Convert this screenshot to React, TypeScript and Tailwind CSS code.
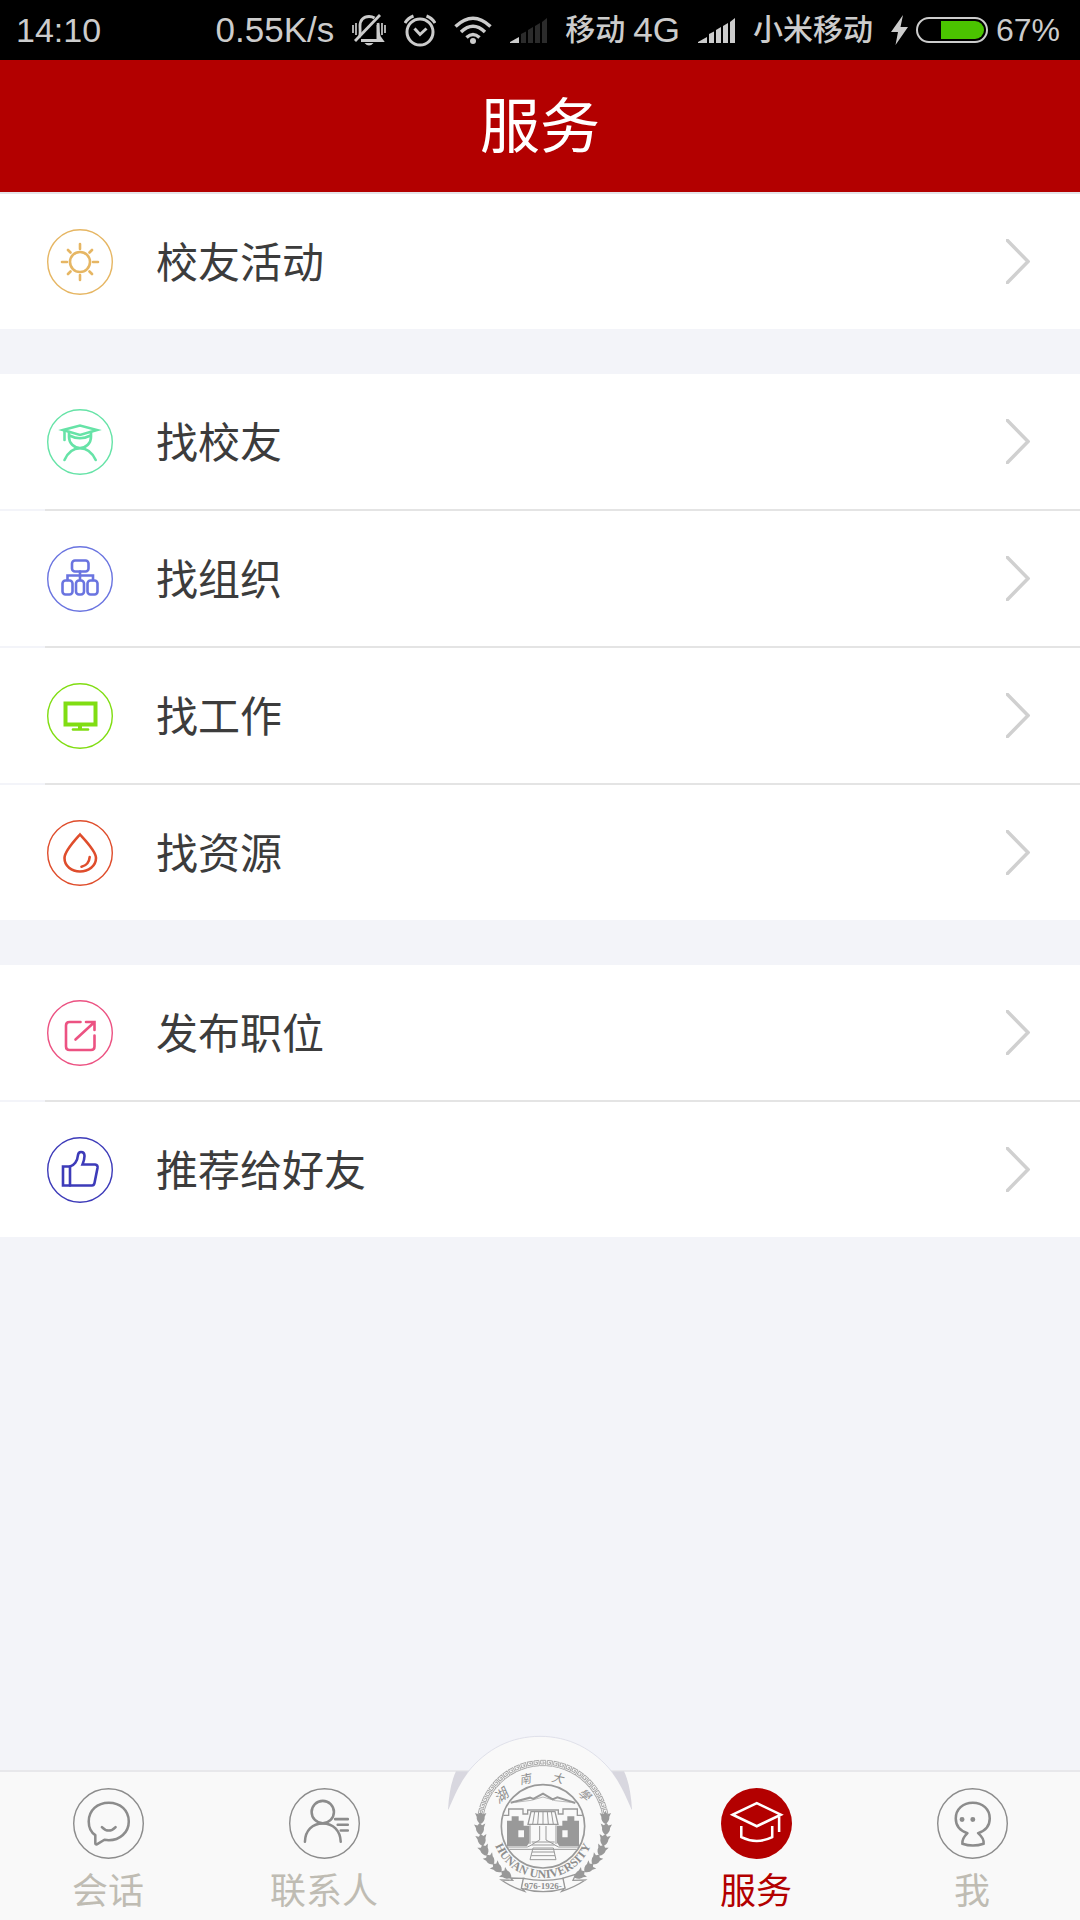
import React from 'react';

interface ServiceItem {
  label: string;
  color: string;
  icon: React.ReactNode;
}

interface TabItem {
  label: string;
  icon: React.ReactNode;
  active?: boolean;
}

const groups: ServiceItem[][] = [
  [
    {
      label: '校友活动',
      color: 'text-[#e6b663]',
      icon: (
        <>
          <circle cx="33" cy="33" r="10" />
          <path d="M33 15v5M33 46v5M15 33h5M46 33h5M21 21l2.500 2.500M42.500 42.500L45 45M21 45l2.500-2.500M42.500 23.500L45 21" />
        </>
      ),
    },
  ],
  [
    {
      label: '找校友',
      color: 'text-[#66e3a7]',
      icon: (
        <>
          <path d="M16 21L33 16.500L50 21L33 26Z" />
          <path d="M17.500 21.500V31" />
          <path d="M22 23v5a11 11 0 0 0 22 0v-5M22.500 26.500Q33 32 43.500 26.500" />
          <path d="M17.500 51C21 43 26 39.200 33 39.200S45 43 48.700 51" />
        </>
      ),
    },
    {
      label: '找组织',
      color: 'text-[#6a74e0]',
      icon: (
        <>
          <rect x="25" y="14.500" width="16.500" height="11" rx="3" />
          <path d="M33 25.500V34M20.500 34v-4.500H46V34" />
          <rect x="15.500" y="34.500" width="10" height="14" rx="3" />
          <rect x="29" y="34.500" width="8" height="14" rx="3" />
          <rect x="40.500" y="34.500" width="10" height="14" rx="3" />
        </>
      ),
    },
    {
      label: '找工作',
      color: 'text-[#80dd12]',
      icon: (
        <>
          <rect x="18.500" y="20.500" width="30" height="21" strokeWidth="4" />
          <path d="M33 43v3" strokeWidth="4" strokeLinecap="butt" />
          <path d="M26 46.500h15" />
        </>
      ),
    },
    {
      label: '找资源',
      color: 'text-[#df4d2c]',
      icon: (
        <>
          <path d="M33 14.500C29 19 17.500 31 17.500 38C17.500 46 24.500 51.500 33 51.500S49 46 49 38C49 31 37 19 33 14.500Z" />
          <path d="M42.700 37Q42 45 34.500 46.700" />
        </>
      ),
    },
  ],
  [
    {
      label: '发布职位',
      color: 'text-[#ec5282]',
      icon: (
        <>
          <path d="M33.500 22H22.500Q19 22 19 25.500V46.500Q19 50 22.500 50H44Q47.500 50 47.500 46.500V35.500" />
          <path d="M28.500 39.500L47 22.500M39 22H47.500V30" />
        </>
      ),
    },
    {
      label: '推荐给好友',
      color: 'text-[#3d3bb9]',
      icon: (
        <>
          <path d="M16 29.500H23C27 28.500 30.500 24 30.800 19C31 16.500 32 15 34 15C36 15 37.500 16.500 37.500 19C37.500 22.500 36.500 25 35.500 27.500H48Q51 28 50.500 31L47.500 46Q47 48.500 45 48.500H16Z" />
          <path d="M23 29.500V48.500" />
        </>
      ),
    },
  ],
];

const leftTabs: TabItem[] = [
  {
    label: '会话',
    icon: (
      <>
        <path d="M22 46.500C17.500 43.500 15.500 38.500 15.500 33C15.500 22 24 14.500 35.300 14.500S55 22 55 33S46 51.500 35.300 51.500L31 51L23.500 55.500Q22 56 22 54.500Z" />
        <path d="M28.500 38.500Q35.300 45.500 42 38.500" />
      </>
    ),
  },
  {
    label: '联系人',
    icon: (
      <>
        <circle cx="33.300" cy="23.700" r="11" />
        <path d="M15.700 53C16 42 23 35 33.300 35S50.500 42 51 53M45.500 30.700H58M48 36.300H58M51 42H58" />
      </>
    ),
  },
];

const rightTabs: TabItem[] = [
  {
    label: '服务',
    active: true,
    icon: (
      <>
        <path d="M11.500 26.300L35.300 15L59 26.300L35.300 37.700Z" strokeLinejoin="miter" />
        <path d="M57.300 28V43.500M20 37.500V48.500Q35.300 56 50.500 48.500V37.500" strokeLinecap="butt" />
      </>
    ),
  },
  {
    label: '我',
    icon: (
      <>
        <path d="M30 44.500C22.500 42 18.500 36.500 18.500 30C18.500 21 25.500 14.500 35.300 14.500S52 21 52 30C52 36.500 48 42 40.500 44.500C44 47.500 46.500 51 46 55Q35.300 58.500 25 55C24.500 51 27 47.500 30 44.500Z" />
        <circle cx="24.700" cy="31" r="1.200" fill="currentColor" />
        <circle cx="35.300" cy="31" r="1.200" fill="currentColor" />
      </>
    ),
  },
];

const SignalIcon: React.FC<{ level: number }> = ({ level }) => {
  const bars = ['M0 25V24L9 19V25Z', 'M11 25V16L16 13.500V25Z', 'M18 25V12L23 9V25Z', 'M25 25V8L30 5V25Z', 'M32 25V4L37 0V25Z'];
  return (
    <svg viewBox="0 0 37 25" className="h-[25px] w-[37px]">
      {bars.map((d, i) => (
        <path key={d} d={d} fill={i < level ? '#cccccc' : '#2b2b2b'} />
      ))}
    </svg>
  );
};

const StatusBar: React.FC = () => (
  <div className="flex h-[60px] items-center justify-between bg-black pl-4 pr-5 text-[35px] leading-[60px] whitespace-nowrap text-[#cccccc]">
    <span className="text-[34px]">14:10</span>
    <div className="flex items-center gap-[18px]">
      <span>0.55K/s</span>
      {/* muted / vibrate */}
      <svg viewBox="0 0 34 32" className="h-8 w-[34px]" fill="none" stroke="currentColor" strokeWidth="2.800">
        <path d="M7.500 23C8.500 20 8 16 8 12C8 6 11.500 2.500 17 2.500C19 2.500 21 3 22.500 4" />
        <path d="M3 27L28 1" />
        <path d="M26 9C27 13 25.500 19 27.500 23L30 26.500H9" />
        <path d="M24.500 11L27 10V25H24.500Z" fill="currentColor" stroke="none" />
        <path d="M12.500 29H21.500Q17 34 12.500 29Z" fill="currentColor" stroke="none" />
        <path d="M1 11v8M4 9v12M30 9v12M33 11v8" strokeWidth="1.700" />
      </svg>
      {/* alarm */}
      <svg viewBox="0 0 32 33" className="h-[33px] w-8" fill="none" stroke="currentColor" strokeWidth="3">
        <circle cx="16" cy="18" r="13" />
        <path d="M10.500 14.500L16 20.500L22.500 14.500" />
        <path d="M1 9Q4 4 9.500 2M31 9Q28 4 22.500 2" />
      </svg>
      {/* wifi */}
      <svg viewBox="0 0 38 28" className="h-7 w-[38px]" fill="none" stroke="currentColor" strokeWidth="3.500">
        <path d="M1.500 10.500Q19 -6 36.500 10.500M7 16Q19 4.500 31 16M12.500 21.500Q19 15.500 25.500 21.500" />
        <circle cx="19" cy="25" r="3" fill="currentColor" stroke="none" />
      </svg>
      <SignalIcon level={1} />
      <span className="flex gap-2">
        <span className="text-[30px] font-medium">移动</span>
        <span>4G</span>
      </span>
      <SignalIcon level={5} />
      <span className="text-[30px] font-medium">小米移动</span>
      <div className="flex items-center gap-2">
        <svg viewBox="0 0 17 30" className="h-[30px] w-[17px]" fill="currentColor">
          <path d="M12 0L0 17H7L4.500 30L17 12H9.500Z" />
        </svg>
        <svg viewBox="0 0 72 26" className="h-[26px] w-[72px]">
          <rect x="1" y="1" width="70" height="24" rx="12" fill="none" stroke="#cccccc" strokeWidth="2" />
          <path d="M25 4H59A9 9 0 0 1 59 22H25Z" fill="#4bc400" />
        </svg>
        <span className="text-[32px]">67%</span>
      </div>
    </div>
  </div>
);

const ServiceRow: React.FC<{ item: ServiceItem }> = ({ item }) => (
  <button type="button" className="flex h-[135px] w-full items-center bg-white pl-[47px] pr-[50px] text-left">
    <svg
      viewBox="0 0 66 66"
      className={`h-[66px] w-[66px] shrink-0 ${item.color}`}
      fill="none"
      stroke="currentColor"
      strokeWidth="2.600"
      strokeLinecap="round"
    >
      <circle cx="33" cy="33" r="32.300" strokeWidth="1.400" />
      {item.icon}
    </svg>
    <span className="ml-[43px] flex-1 pt-1 text-[42px] leading-[60px] text-[#3c3c3c]">{item.label}</span>
    <svg viewBox="0 0 24 45" className="h-[45px] w-6" fill="none" stroke="#d0d0d0" strokeWidth="3.500">
      <path d="M0 0L22 22.500L0 45" />
    </svg>
  </button>
);

const Tab: React.FC<{ tab: TabItem }> = ({ tab }) => (
  <button type="button" className="flex flex-1 flex-col items-center pt-4">
    <svg
      viewBox="0 0 70 70"
      className={`h-[71px] w-[71px] ${tab.active ? 'text-white' : 'text-[#8c8c8c]'}`}
      fill="none"
      stroke="currentColor"
      strokeWidth="2.500"
      strokeLinecap="round"
      strokeLinejoin="round"
    >
      {tab.active ? <circle cx="35" cy="35" r="35" fill="#b30000" stroke="none" /> : <circle cx="35" cy="35" r="34.300" strokeWidth="1.400" />}
      {tab.icon}
    </svg>
    <span className={`mt-1.5 text-[36px] leading-[54px] ${tab.active ? 'text-[#b30000]' : 'text-[#bfbcb3]'}`}>{tab.label}</span>
  </button>
);

// leaf positions on the left half of the wreath: x, y, rotation
const leaves = [
  [152, 293, 0],
  [150, 326, -4],
  [155, 359, -10],
  [163, 390, -22],
  [180, 418, -34],
  [201, 443, -46],
  [228, 463, -58],
];

const keyAngles = Array.from({ length: 27 }, (_, i) => (i - 13) * 5.9);

const Wreath: React.FC = () => (
  <g fill="#999999">
    {leaves.map(([x, y, r]) => (
      <path key={y} d="M0 19C-8 14 -13 6 -12 -3L-17 -14L-7 -10L0 -17L7 -10L17 -14L12 -3C13 6 8 14 0 19Z" transform={`translate(${x} ${y}) rotate(${r})`} />
    ))}
  </g>
);

const Emblem: React.FC = () => (
  <svg viewBox="0 0 660 600" className="h-[200px] w-[220px]">
    <path d="M78 154Q58 195 54 270Q64 262 72 245L120 154ZM582 154Q602 195 606 270Q596 262 588 245L540 154Z" fill="#d8d7df" />
    <path d="M54 272C82 205 100 175 120 150C175 82 245 49 330 49S485 82 540 150C560 175 578 205 606 272V600H54Z" fill="#f9f9f9" />
    <path d="M112 158C170 85 245 49 330 49S490 85 548 158" fill="none" stroke="#dfe0ea" strokeWidth="3" />

    {/* meander ring */}
    <g fill="none" stroke="#a6a6a6" strokeWidth="2.800">
      {keyAngles.map((a) => (
        <path key={a} d="M-9 8H8V-8H-7V3H3V-3H-2" transform={`rotate(${a} 339 319) translate(339 129)`} />
      ))}
    </g>

    <Wreath />
    <g transform="translate(678 0) scale(-1 1)">
      <Wreath />
    </g>

    <g fill="#8f8f8f" fontSize="35" textAnchor="middle" className="italic" fontFamily="'Noto Sans CJK TC', sans-serif">
      <text transform="translate(222 239) rotate(-38)" fontSize="42">湖</text>
      <text transform="translate(288 190) rotate(-12)">南</text>
      <text transform="translate(380 187) rotate(12)">大</text>
      <text transform="translate(455 234) rotate(40)">學</text>
    </g>

    {/* gate */}
    <g fill="none" stroke="#999999" strokeWidth="4">
      <circle cx="339" cy="319" r="125" strokeWidth="5" />
      <path d="M242 248L300 233L310 237L339 221L368 238L382 232L436 249" strokeWidth="6" />
      <path d="M256 247L304 241L339 231L376 242L422 247" strokeWidth="2" />
      <path d="M220 286H236V267H279V282H293V270H385V282H399V267H442V286H458" />
      <path d="M303 275L294 313H384L375 275Z" />
      <path d="M314 275L308 313M326 275L323 313M339 275V313M352 275L355 313M364 275L370 313" strokeWidth="3" />
      <path d="M300 316V372M378 316V372M329 318V360L305 374M348 318V360L374 374M305 366H374" strokeWidth="3" />
      <path d="M230 381H292L305 375H374L386 381H448M238 388H440" strokeWidth="3" />
      <path d="M309 384H370L378 419H300ZM306 396H373M304 407H375" strokeWidth="3" />
    </g>
    <g fill="#999999">
      <path fillRule="evenodd" d="M231 302H245V289H266V302H281V317H298V368L291 378H231ZM265 331V352H282V331Z" />
      <path fillRule="evenodd" d="M447 302H433V289H412V302H397V317H381V368L388 378H447ZM397 331V352H413V331Z" />
    </g>

    <path id="motto" d="M184 319A155 155 0 0 0 494 319" fill="none" />
    <text fill="#8f8f8f" fontSize="36" fontWeight="700" textAnchor="middle" fontFamily="'Liberation Serif', serif">
      <textPath href="#motto" startOffset="50%">HUNAN UNIVERSITY</textPath>
    </text>

    {/* ribbon */}
    <g fill="#f9f9f9" stroke="#999999" strokeWidth="4">
      <path d="M282 475L242 474L248 481L214 480Q244 501 284 514L275 503Z" />
      <path d="M397 475L437 463L429 481L466 480Q435 501 395 514L404 503Z" />
      <path d="M280 475Q339 487 399 475L405 505Q339 525 274 505Z" />
    </g>
    <text x="339" y="506" fill="#8f8f8f" fontSize="27" fontWeight="700" textAnchor="middle" fontFamily="'Liberation Serif', serif">
      976-1926-
    </text>
  </svg>
);

const App: React.FC = () => (
  <div className="flex min-h-screen flex-col bg-[#f3f4f9] font-['Liberation_Sans','Noto_Sans_CJK_SC',sans-serif]">
    <StatusBar />
    <header className="flex h-[132px] items-center justify-center bg-[#b30000] pt-1">
      <h1 className="text-[60px] leading-[84px] text-white">服务</h1>
    </header>

    <main className="flex flex-1 flex-col gap-[45px] border-t-2 border-[#e4e4e8]">
      {groups.map((group, i) => (
        <ul key={i}>
          {group.map((item, j) => (
            <li key={item.label}>
              {j > 0 && <div className="ml-[45px] h-0.5 bg-[#e4e4e4]" />}
              <ServiceRow item={item} />
            </li>
          ))}
        </ul>
      ))}
    </main>

    <nav className="relative flex h-[150px] border-t-2 border-[#e8e8eb] bg-[#f9f9f9]">
      {leftTabs.map((tab) => (
        <Tab key={tab.label} tab={tab} />
      ))}
      <div className="flex-1" />
      {rightTabs.map((tab) => (
        <Tab key={tab.label} tab={tab} />
      ))}
      <button type="button" aria-label="湖南大学" className="absolute bottom-0 left-1/2 -translate-x-1/2">
        <Emblem />
      </button>
    </nav>
  </div>
);

export default App;
